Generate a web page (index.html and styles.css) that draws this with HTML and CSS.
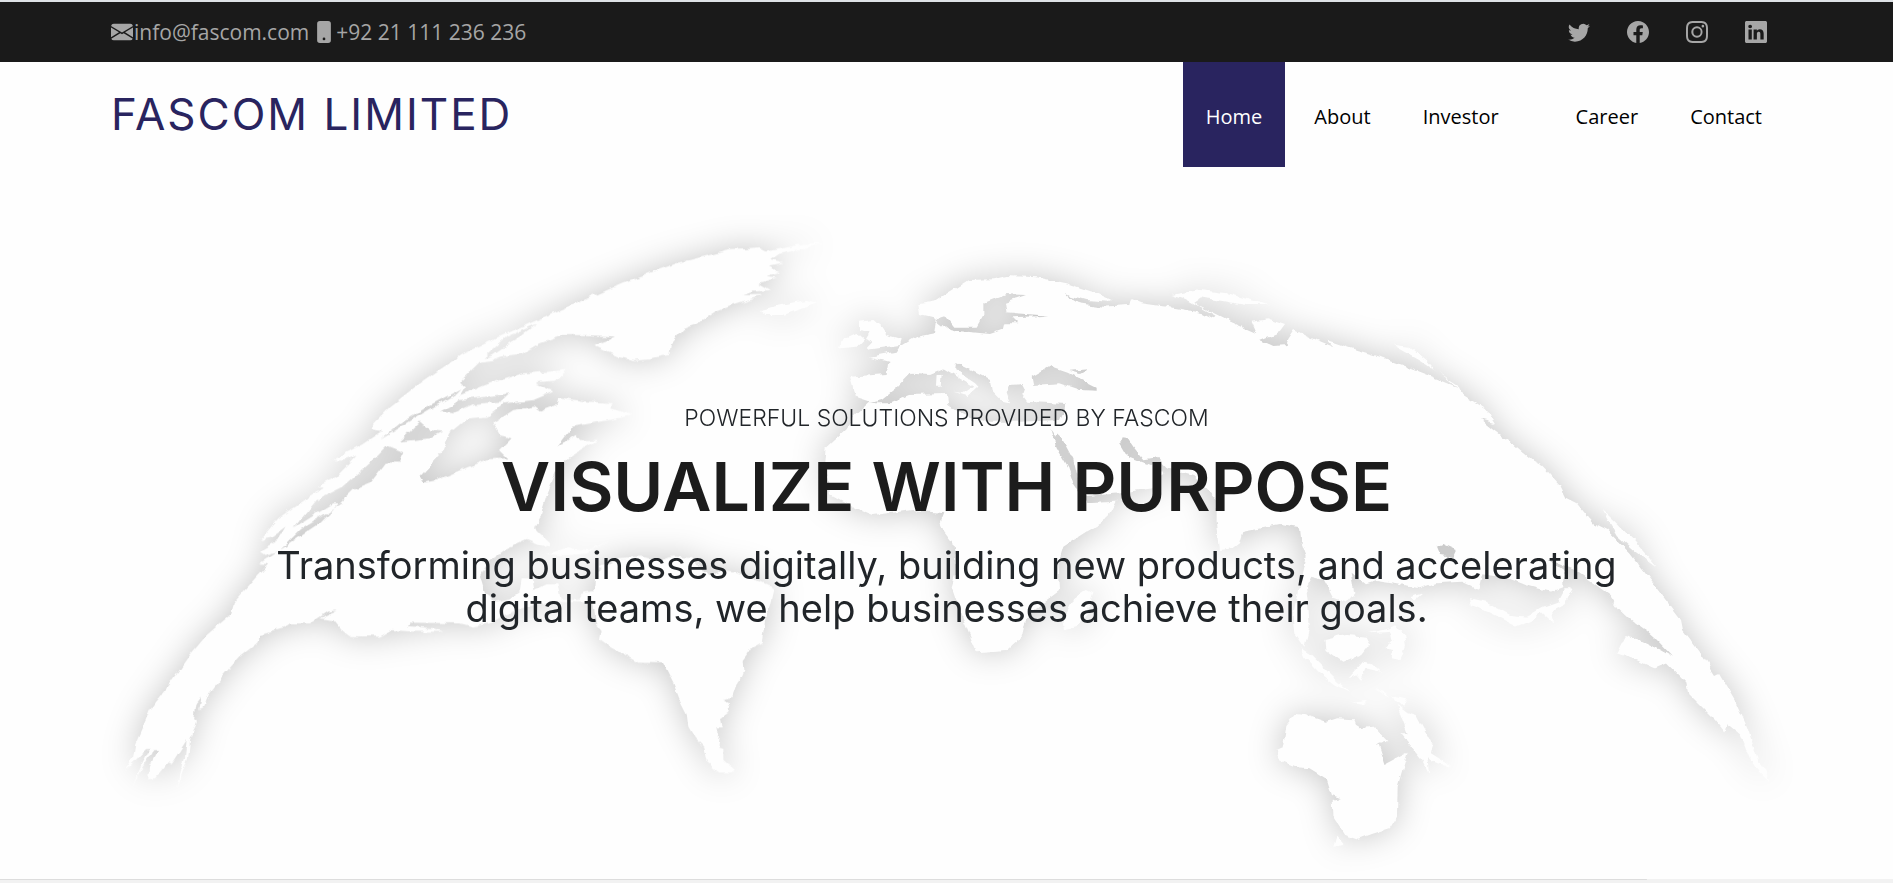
FILE: index.html
```html
<!DOCTYPE html>
<html lang="en">
<head>
<meta charset="utf-8">
<meta name="viewport" content="width=device-width, initial-scale=1">
<title>Fascom Limited</title>
<link rel="stylesheet" href="styles.css">
</head>
<body>
<div class="topbar">
  <div class="contact-info">
    <a class="contact-link" href="mailto:info@fascom.com"><svg class="icon" viewBox="0 0 16 16" aria-hidden="true"><path d="M.05 3.555A2 2 0 0 1 2 2h12a2 2 0 0 1 1.95 1.555L8 8.414.05 3.555ZM0 4.697v7.104l5.803-3.558L0 4.697ZM6.761 8.83l-6.57 4.027A2 2 0 0 0 2 14h12a2 2 0 0 0 1.808-1.144l-6.57-4.027L8 9.586l-1.239-.757Zm3.436-.586L16 11.801V4.697l-5.803 3.546Z"/></svg><span>info@fascom.com</span></a>
    <a class="contact-link" href="tel:+9221111236236"><svg class="icon" viewBox="0 0 16 16" aria-hidden="true"><path d="M3 2a2 2 0 0 1 2-2h6a2 2 0 0 1 2 2v12a2 2 0 0 1-2 2H5a2 2 0 0 1-2-2V2zm6 11a1 1 0 1 0-2 0 1 1 0 0 0 2 0z"/></svg><span>+92 21 111 236 236</span></a>
  </div>
  <div class="social">
    <a href="#" aria-label="Twitter"><svg class="icon" viewBox="0 0 16 16"><path d="M5.026 15c6.038 0 9.341-5.003 9.341-9.334 0-.14 0-.282-.006-.422A6.685 6.685 0 0 0 16 3.542a6.658 6.658 0 0 1-1.889.518 3.301 3.301 0 0 0 1.447-1.817 6.533 6.533 0 0 1-2.087.793A3.286 3.286 0 0 0 7.875 6.03a9.325 9.325 0 0 1-6.767-3.429 3.289 3.289 0 0 0 1.018 4.382A3.323 3.323 0 0 1 .64 6.575v.045a3.288 3.288 0 0 0 2.632 3.218 3.203 3.203 0 0 1-.865.115 3.23 3.23 0 0 1-.614-.057 3.283 3.283 0 0 0 3.067 2.277A6.588 6.588 0 0 1 .78 13.58a6.32 6.32 0 0 1-.78-.045A9.344 9.344 0 0 0 5.026 15z"/></svg></a>
    <a href="#" aria-label="Facebook"><svg class="icon" viewBox="0 0 16 16"><path d="M16 8.049c0-4.446-3.582-8.05-8-8.05C3.58 0-.002 3.603-.002 8.05c0 4.017 2.926 7.347 6.75 7.951v-5.625h-2.03V8.05H6.75V6.275c0-2.017 1.195-3.131 3.022-3.131.876 0 1.791.157 1.791.157v1.98h-1.009c-.993 0-1.303.621-1.303 1.258v1.51h2.218l-.354 2.326H9.25V16c3.824-.604 6.75-3.934 6.75-7.951z"/></svg></a>
    <a href="#" aria-label="Instagram"><svg class="icon" viewBox="0 0 16 16"><path d="M8 0C5.829 0 5.556.01 4.703.048 3.85.088 3.269.222 2.76.42a3.917 3.917 0 0 0-1.417.923A3.927 3.927 0 0 0 .42 2.76C.222 3.268.087 3.85.048 4.7.01 5.555 0 5.827 0 8.001c0 2.172.01 2.444.048 3.297.04.852.174 1.433.372 1.942.205.526.478.972.923 1.417.444.445.89.719 1.416.923.51.198 1.09.333 1.942.372C5.555 15.99 5.827 16 8 16s2.444-.01 3.298-.048c.851-.04 1.434-.174 1.943-.372a3.916 3.916 0 0 0 1.416-.923c.445-.445.718-.891.923-1.417.197-.509.332-1.09.372-1.942C15.99 10.445 16 10.173 16 8s-.01-2.445-.048-3.299c-.04-.851-.175-1.433-.372-1.941a3.926 3.926 0 0 0-.923-1.417A3.911 3.911 0 0 0 13.24.42c-.51-.198-1.092-.333-1.943-.372C10.443.01 10.172 0 7.998 0h.003zm-.717 1.442h.718c2.136 0 2.389.007 3.232.046.78.035 1.204.166 1.486.275.373.145.64.319.92.599.28.28.453.546.598.92.11.281.24.705.275 1.485.039.843.047 1.096.047 3.231s-.008 2.389-.047 3.232c-.035.78-.166 1.203-.275 1.485a2.47 2.47 0 0 1-.599.919c-.28.28-.546.453-.92.598-.28.11-.704.24-1.485.276-.843.038-1.096.047-3.232.047s-2.39-.009-3.233-.047c-.78-.036-1.203-.166-1.485-.276a2.478 2.478 0 0 1-.92-.598 2.48 2.48 0 0 1-.6-.92c-.109-.281-.24-.705-.275-1.485-.038-.843-.046-1.096-.046-3.233 0-2.136.008-2.388.046-3.231.036-.78.166-1.204.276-1.486.145-.373.319-.64.599-.92.28-.28.546-.453.92-.598.282-.11.705-.24 1.485-.276.738-.034 1.024-.044 2.515-.045v.002zm4.988 1.328a.96.96 0 1 0 0 1.92.96.96 0 0 0 0-1.92zm-4.27 1.122a4.109 4.109 0 1 0 0 8.217 4.109 4.109 0 0 0 0-8.217zm0 1.441a2.667 2.667 0 1 1 0 5.334 2.667 2.667 0 0 1 0-5.334z"/></svg></a>
    <a href="#" aria-label="LinkedIn"><svg class="icon" viewBox="0 0 16 16"><path d="M0 1.146C0 .513.526 0 1.175 0h13.65C15.474 0 16 .513 16 1.146v13.708c0 .633-.526 1.146-1.175 1.146H1.175C.526 16 0 15.487 0 14.854V1.146zm4.943 12.248V6.169H2.542v7.225h2.401zm-1.2-8.212c.837 0 1.358-.554 1.358-1.248-.015-.709-.52-1.248-1.342-1.248-.822 0-1.359.54-1.359 1.248 0 .694.521 1.248 1.327 1.248h.016zm4.908 8.212V9.359c0-.216.016-.432.08-.586.173-.431.568-.878 1.232-.878.869 0 1.216.662 1.216 1.634v3.865h2.401V9.25c0-2.22-1.184-3.252-2.764-3.252-1.274 0-1.845.7-2.165 1.193v.025h-.016a5.54 5.54 0 0 1 .016-.025V6.169h-2.4c.03.678 0 7.225 0 7.225h2.4z"/></svg></a>
  </div>
</div>
<header class="header">
  <a class="logo" href="#">FASCOM LIMITED</a>
  <nav class="nav">
    <a class="nav-link active" href="#">Home</a>
    <a class="nav-link" href="#">About</a>
    <a class="nav-link has-menu" href="#">Investor</a>
    <a class="nav-link" href="#">Career</a>
    <a class="nav-link" href="#">Contact</a>
  </nav>
</header>
<main class="hero">
  <svg class="map" viewBox="0 501 5679 2136" preserveAspectRatio="xMidYMid slice" aria-hidden="true">
    <defs>
      <filter id="relief" filterUnits="userSpaceOnUse" x="100" y="501" width="5500" height="2136" color-interpolation-filters="sRGB">
        <feTurbulence type="fractalNoise" baseFrequency="0.03" numOctaves="3" seed="4" result="noise"/>
        <feDisplacementMap in="SourceGraphic" in2="noise" scale="18" xChannelSelector="R" yChannelSelector="G" result="land"/>
        <feGaussianBlur in="land" stdDeviation="50" result="soft"/>
        <feColorMatrix in="soft" type="matrix" values="0 0 0 0 0  0 0 0 0 0  0 0 0 0 0  0 0 0 .22 0" result="shade"/>
        <feMerge><feMergeNode in="shade"/><feMergeNode in="land"/></feMerge>
      </filter>
    </defs>
    <g class="land" filter="url(#relief)">
      <!-- North America and Greenland -->
      <path d="M2465 730 2405 733 2300 755 2280 745 2190 750 2100 772 2030 790 1960 815 1875 848 1840 862 1760 898 1690 925 1630 952 1510 1005 1390 1062 1310 1115 1240 1165 1170 1220 1120 1270 1115 1285 1150 1290 1090 1330 1000 1380 1030 1382 1070 1367 1010 1430 950 1462 975 1462 910 1500 835 1555 780 1620 815 1612 860 1580 835 1620 780 1655 795 1665 830 1655 780 1690 805 1692 765 1735 700 1810 690 1845 620 1905 570 1965 515 2045 450 2130 405 2235 400 2270 378 2310 435 2250 447 2250 395 2360 425 2305 460 2250 475 2250 450 2300 448 2338 465 2335 505 2285 515 2290 560 2220 555 2270 532 2365 565 2270 570 2220 588 2165 582 2160 590 2110 605 2090 598 2130 610 2125 628 2080 670 2025 720 1970 770 1930 780 1905 850 1885 870 1870 930 1870 985 1835 1010 1832 960 1855 1000 1860 1025 1890 1050 1908 1140 1910 1175 1890 1240 1895 1330 1895 1300 1885 1220 1878 1230 1868 1380 1870 1420 1880 1470 1870 1510 1845 1580 1820 1670 1805 1760 1808 1785 1790 1785 1770 1750 1775 1735 1800 1685 1800 1675 1750 1640 1750 1600 1770 1595 1735 1565 1735 1560 1770 1530 1795 1490 1805 1455 1780 1440 1730 1460 1690 1515 1650 1580 1620 1630 1640 1650 1630 1610 1590 1605 1580 1620 1550 1635 1500 1650 1460 1670 1410 1715 1365 1790 1320 1740 1320 1730 1305 1675 1338 1720 1280 1800 1265 1900 1245 1830 1225 1845 1210 1760 1205 1675 1192 1670 1215 1620 1235 1600 1220 1540 1230 1480 1270 1500 1305 1535 1315 1500 1350 1525 1375 1460 1378 1310 1440 1270 1448 1260 1430 1330 1350 1350 1300 1405 1255 1460 1250 1510 1210 1600 1200 1660 1175 1610 1150 1665 1145 1700 1110 1650 1115 1570 1120 1470 1150 1380 1185 1395 1160 1380 1145 1440 1085 1475 1080 1500 1070 1570 1060 1620 1030 1690 1005 1765 1005 1845 1010 1780 1035 1810 1050 1860 1072 1900 1080 1950 1075 2005 1065 2010 1030 2050 985 2100 965 2150 932 2210 910 2290 885 2230 885 2260 875 2310 870 2275 850 2330 833 2300 828 2340 815 2310 800 2350 790 2310 780 2340 760Z
        M1140 1320 1260 1245 1370 1180 1385 1165 1290 1215 1200 1270Z
        M1320 1235 1380 1200 1530 1180 1505 1205 1420 1212 1360 1240Z
        M1200 1325 1260 1265 1290 1290 1330 1295 1290 1315Z
        M950 1500 1030 1460 1120 1380 1160 1340 1210 1360 1200 1385 1160 1385 1110 1450 1060 1470 960 1570 840 1650 900 1590 1030 1510 1000 1510 880 1585Z
        M1480 1065 1560 1010 1610 970 1520 1010 1450 1075Z"/>
      <!-- Caribbean -->
      <path d="M1640 1662 1700 1645 1770 1650 1825 1622 1760 1660 1700 1665ZM1790 1700 1830 1690 1850 1715Z"/>
      <!-- South America -->
      <path transform="translate(1680 1500)" d="M60 280 105 270 110 215 150 190 170 175 240 170 300 180 340 170 400 175 440 230 480 210 530 215 640 265 630 310 615 360 605 430 570 450 548 480 550 510 530 560 520 590 490 598 510 612 505 635 480 655 485 685 465 685 480 705 475 740 490 745 490 780 525 810 515 820 480 820 440 785 430 740 405 715 385 680 380 640 360 600 340 550 310 490 235 488 140 435 120 420 125 390 108 370 100 310Z"/>
      <!-- Europe, Asia and Africa -->
      <path d="M2550 1130 2660 1122 2665 1085 2610 1070 2690 1055 2700 1040 2750 1010 2805 1000 2810 965 2800 955 2760 945 2755 910 2810 900 2905 840 2980 838 3020 828 3110 832 3200 850 3290 880 3335 900 3330 905 3260 900 3195 882 3240 910 3310 920 3385 915 3390 895 3425 910 3530 925 3610 940 3640 955 3650 950 3560 900 3515 885 3600 870 3680 880 3805 915 3740 915 3600 892 3580 905 3600 920 3680 960 3770 1000 3755 965 3805 958 3855 975 3840 995 3780 1020 3820 1038 3860 1035 3865 1020 3885 990 3925 1010 4000 1042 3980 1020 4070 1050 4140 1070 4230 1105 4320 1140 4380 1165 4320 1120 4260 1080 4180 1035 4230 1040 4280 1080 4305 1110 4375 1155 4390 1185 4460 1230 4485 1270 4440 1258 4480 1290 4540 1335 4600 1385 4630 1400 4680 1455 4700 1495 4730 1510 4780 1570 4820 1590 4890 1660 4963 1755 5043 1860 5049 1890 5102 1960 5145 2025 5156 2020 5209 2110 5241 2180 5274 2280 5300 2320 5306 2345 5279 2320 5252 2280 5220 2200 5182 2170 5177 2200 5145 2160 5065 2080 5059 2050 5000 1990 4963 2005 4909 1980 4850 1960 4877 1905 4909 1915 4963 1940 5016 1970 4963 1915 4941 1895 4893 1860 4856 1825 4829 1785 4781 1750 4716 1705 4640 1675 4690 1710 4690 1760 4652 1775 4577 1755 4513 1730 4450 1720 4438 1770 4384 1745 4304 1750 4256 1765 4191 1750 4127 1740 4095 1750 4052 1715 4063 1780 4041 1805 3999 1790 3972 1740 3934 1730 3918 1760 3924 1810 3929 1880 3913 1940 3886 1900 3881 1850 3900 1760 3920 1670 3905 1630 3900 1585 3840 1575 3730 1595 3720 1630 3700 1645 3660 1650 3650 1560 3650 1500 3620 1465 3580 1425 3500 1405 3470 1372 3430 1378 3400 1340 3385 1318 3365 1315 3360 1328 3385 1370 3450 1395 3475 1390 3490 1420 3460 1465 3380 1475 3260 1485 3235 1440 3220 1380 3175 1295 3165 1310 3150 1290 3170 1345 3205 1405 3222 1455 3260 1510 3350 1505 3320 1560 3260 1595 3190 1640 3175 1690 3180 1770 3140 1800 3100 1830 3075 1870 3065 1910 3020 1950 2930 1957 2915 1920 2890 1860 2855 1760 2870 1710 2860 1630 2830 1590 2820 1565 2830 1540 2740 1530 2620 1545 2570 1525 2490 1480 2475 1400 2480 1340 2540 1285 2560 1250 2610 1205 2565 1190Z
        M2610 1210 2645 1200 2690 1165 2735 1118 2790 1122 2830 1105 2880 1135 2920 1160 2890 1180 2860 1175 2905 1188 2935 1160 2925 1150 2865 1110 2868 1090 2900 1105 2970 1140 2975 1170 3010 1205 3030 1210 3020 1180 3030 1155 3065 1152 3075 1170 3070 1185 3085 1205 3200 1212 3180 1260 3060 1265 2960 1265 2890 1245 2845 1215 2840 1182 2730 1185 2670 1210Z
        M2810 1125 2828 1125 2825 1160 2808 1160Z
        M3095 1130 3150 1098 3200 1115 3290 1160 3290 1172 3240 1170 3180 1150 3100 1155Z
        M3205 1112 3265 1108 3240 1122Z
        M2950 910 3020 882 3075 885 3015 905 3020 940 3145 950 3040 955 3055 970 3010 970 3005 990 2970 1002 2870 992 2840 985 2805 958 2835 948 2860 980 2930 980 2950 945Z
        M4310 1640 4330 1632 4370 1650 4360 1672 4320 1665Z"/>
      <path transform="translate(2460 720)" d="M120 245 160 240 185 262 200 285 245 298 240 315 140 330 160 310 135 300 150 275 120 270ZM60 325 70 300 110 282 130 300 110 320Z"/>
      <path d="M2280 930 2330 918 2420 900 2450 910 2350 945 2300 945Z"/>
      <path d="M3190 1860 3220 1800 3260 1770 3280 1780 3260 1840 3230 1880 3195 1890Z"/>
      <path d="M4808 1530 4850 1570 4900 1620 4970 1700 4900 1650 4850 1605Z"/>
      <!-- South-east Asia, Japan and Australia -->
      <g transform="matrix(1.07 0 0 1 3720 1680)">
        <path d="M237 240 300 225 355 230 365 250 340 285 290 308 240 270Z"/>
        <path d="M170 265 200 285 260 350 310 395 270 375 220 335 180 290Z"/>
        <path d="M305 355 345 305 370 310 395 335 352 325 340 360 328 345Z"/>
        <path d="M360 220 420 205 440 195 460 225 465 260 450 300 425 295 430 270 405 265 430 240 425 215Z"/>
        <path d="M645 115 690 125 760 165 800 170 850 140 890 125 910 85 930 85 910 130 875 150 880 190 845 155 820 180 775 200 700 160 650 135Z"/>
        <path d="M480 112 515 100 490 122ZM380 385 405 395 420 415ZM315 425 355 420 345 432ZM430 405 465 415 455 440 440 425Z"/>
        <path d="M440 435 465 455 495 465 540 555 535 580 580 610 590 620 555 612 525 590 530 640 512 600 485 565 450 520 470 520Z"/>
        <path d="M100 570 120 560 130 495 155 462 185 465 240 485 270 475 320 478 330 505 375 500 410 540 385 550 405 615 470 578 455 630 442 680 440 770 420 805 370 822 330 838 295 825 262 770 260 720 280 715 255 705 240 655 195 625 160 622 110 600ZM270 830 290 855 262 860Z"/>
      </g>
    </g>
  </svg>
  <div class="hero-copy">
    <p class="eyebrow">POWERFUL SOLUTIONS PROVIDED BY FASCOM</p>
    <h1 class="headline">VISUALIZE WITH PURPOSE</h1>
    <p class="lead">Transforming businesses digitally, building new products, and accelerating digital teams, we help businesses achieve their goals.</p>
  </div>
</main>
<footer class="strip"></footer>
</body>
</html>
```
FILE: styles.css
```css
* { box-sizing: border-box; }

body {
  margin: 0;
  min-height: 100vh;
  display: flex;
  flex-direction: column;
  background: #fefefe;
  color: #212529;
  font-family: "Open Sans", "Noto Sans", sans-serif;
}

a { color: inherit; text-decoration: none; }

.topbar {
  display: flex;
  justify-content: space-between;
  align-items: center;
  height: 62px;
  padding: 0 126px 0 111px;
  border-top: 2px solid #dee2e6;
  background: #1a1a1a;
  color: #a6a6a6;
}

.contact-info { display: flex; gap: 4px; font-size: 21px; }
.contact-link { display: flex; align-items: center; gap: 1px; }
.icon { display: block; width: 22px; height: 22px; fill: currentColor; }
.social { display: flex; gap: 37px; }

.header {
  display: flex;
  justify-content: space-between;
  height: 105px;
  padding: 0 108px 0 111px;
  background: #fefefe;
}

.logo {
  align-self: center;
  padding-bottom: 2px;
  color: #29245f;
  font-family: Inter, sans-serif;
  font-size: 44px;
  font-weight: 400;
  letter-spacing: 2px;
}

.nav { display: flex; gap: 6px; }
.nav-link {
  display: flex;
  align-items: center;
  padding: 3px 23px 0;
  color: #000;
  font-size: 20px;
}
.nav-link.active { background: #29245f; color: #fff; }
.nav-link.has-menu { padding-right: 48px; }

.hero {
  position: relative;
  flex: 1;
  display: flex;
  justify-content: center;
  align-items: center;
  padding-bottom: 16px;
  overflow: hidden;
}
.map {
  position: absolute;
  inset: 0;
  width: 100%;
  height: 100%;
}
.land { fill: #fefefe; fill-rule: evenodd; }

.hero-copy {
  position: relative;
  width: 73%;
  text-align: center;
  font-family: Inter, sans-serif;
}
.eyebrow { margin: 0; font-size: 23px; font-weight: 300; line-height: 36px; }
.headline {
  margin: 6px 0 14px;
  color: #1c1c1c;
  font-size: 68px;
  font-weight: 600;
  line-height: 88px;
}
.lead { margin: 0; font-size: 38px; font-weight: 400; line-height: 43px; }

.strip {
  height: 4px;
  background: linear-gradient(#ddd, #ddd) 0 0 / 87% 1px no-repeat, #f2f2f2;
}
```
